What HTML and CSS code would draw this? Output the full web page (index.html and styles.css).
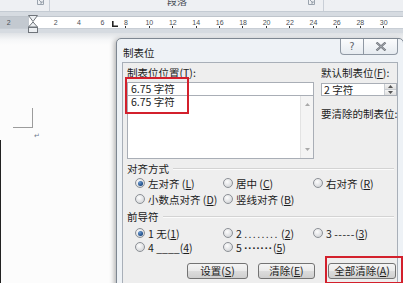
FILE: index.html
```html
<!DOCTYPE html>
<html>
<head>
<meta charset="utf-8">
<link rel="stylesheet" href="styles.css">
</head>
<body>
<div class="ribbon">
  <div class="rgroup g1"><svg class="launcher" width="7" height="7" viewBox="0 0 7 7"><path d="M0.5 0.5h6v6h-6z M2 2l3 3 M5 3v2h-2" fill="none" stroke="#9aa3ad" stroke-width="1"/></svg></div>
  <div class="rgroup g2"><span class="rtitle">段落</span><svg class="launcher" width="7" height="7" viewBox="0 0 7 7"><path d="M0.5 0.5h6v6h-6z M2 2l3 3 M5 3v2h-2" fill="none" stroke="#9aa3ad" stroke-width="1"/></svg></div>
  <div class="rgroup g3"></div>
</div>
<div class="rulerbar">
  <div class="ruler">
    <div class="scale">
      <span class="n">2</span><span class="n"></span><span class="n">2</span><span class="n">4</span><span class="n">6</span><span class="n t">8</span><span class="n t">10</span><span class="n t">12</span><span class="n t">14</span><span class="n t">16</span><span class="n t">18</span><span class="n t">20</span><span class="n t">22</span><span class="n t">24</span><span class="n t">26</span><span class="n t">28</span><span class="n t">30</span>
    </div>
  </div>
  <svg class="indent" width="10" height="18" viewBox="0 0 10 18"><path d="M0.5 0.5h9l-4.5 6z" fill="#eceff2" stroke="#6f747a"/><path d="M5 7l4.5 5h-9z" fill="#eceff2" stroke="#6f747a"/><rect x="0.5" y="12.5" width="9" height="5" fill="#eceff2" stroke="#6f747a"/></svg>
  <svg class="tabmark" width="6" height="6" viewBox="0 0 6 6"><path d="M0 0h1.6v4.4H6V6H0z" fill="#222"/></svg>
</div>
<div class="doc">
  <div class="crop"></div>
  <div class="pmark">↵</div>
</div>

<div class="dialog">
  <div class="titlebar">
    <span class="title">制表位</span>
    <div class="capbtns">
      <span class="cap help">?</span>
      <span class="cap close"><svg width="12" height="9" viewBox="0 0 12 9"><path d="M1.5 0.5l9 8M10.5 0.5l-9 8" stroke="#6d7178" stroke-width="2.2" fill="none"/><path d="M1.5 0.5l9 8M10.5 0.5l-9 8" stroke="#cfd3d8" stroke-width="0.6" fill="none"/></svg></span>
    </div>
  </div>
  <div class="client">
    <div class="top">
      <div class="lcol">
        <div class="lbl">制表位位置(<u>T</u>):</div>
        <div class="input">6.75 字符</div>
        <div class="list">
          <div class="items"><div class="item">6.75 字符</div></div>
          <div class="sbar">
            <span class="sbtn"><svg width="5" height="3" viewBox="0 0 5 3"><path d="M0 3L2.5 0 5 3z" fill="#a9a9a9"/></svg></span>
            <span class="sbtn"><svg width="5" height="3" viewBox="0 0 5 3"><path d="M0 0h5L2.5 3z" fill="#a9a9a9"/></svg></span>
          </div>
        </div>
      </div>
      <div class="rcol">
        <div class="lbl">默认制表位(<u>F</u>):</div>
        <div class="spin">
          <span class="spintext">2 字符</span>
          <span class="spinbtns">
            <span class="sp"><svg width="5" height="3" viewBox="0 0 5 3"><path d="M0 3L2.5 0 5 3z" fill="#555"/></svg></span>
            <span class="sp"><svg width="5" height="3" viewBox="0 0 5 3"><path d="M0 0h5L2.5 3z" fill="#555"/></svg></span>
          </span>
        </div>
        <div class="lbl clr">要清除的制表位:</div>
      </div>
    </div>

    <div class="ghead first"><span>对齐方式</span><i class="rule"></i></div>
    <div class="radios align">
      <label class="opt"><span class="radio on"></span><span class="txt">左对齐 (<u>L</u>)</span></label>
      <label class="opt"><span class="radio"></span><span class="txt">居中 (<u>C</u>)</span></label>
      <label class="opt"><span class="radio"></span><span class="txt">右对齐 (<u>R</u>)</span></label>
      <label class="opt"><span class="radio"></span><span class="txt">小数点对齐 (<u>D</u>)</span></label>
      <label class="opt"><span class="radio"></span><span class="txt">竖线对齐 (<u>B</u>)</span></label>
    </div>

    <div class="ghead"><span>前导符</span><i class="rule"></i></div>
    <div class="radios lead">
      <label class="opt"><span class="radio on"></span><span class="txt">1 无(<u>1</u>)</span></label>
      <label class="opt"><span class="radio"></span><span class="txt">2 <span class="dots">........</span> (<u>2</u>)</span></label>
      <label class="opt"><span class="radio"></span><span class="txt">3 <span class="dash">-----</span>(<u>3</u>)</span></label>
      <label class="opt"><span class="radio"></span><span class="txt">4 <span class="uscore">____</span>(<u>4</u>)</span></label>
      <label class="opt"><span class="radio"></span><span class="txt">5 <span class="mdots">·······</span>(<u>5</u>)</span></label>
    </div>

    <div class="buttons">
      <button class="btn b1">设置(<u>S</u>)</button>
      <button class="btn b2">清除(<u>E</u>)</button>
      <button class="btn b3">全部清除(<u>A</u>)</button>
    </div>
  </div>
</div>

<div class="mark m1"></div>
<div class="mark m2"></div>
</body>
</html>
```
FILE: styles.css
```css
* { box-sizing: border-box; }
html, body { margin: 0; padding: 0; }
body {
  width: 403px;
  height: 283px;
  overflow: hidden;
  position: relative;
  background: #fbfbfb;
  font-family: "Noto Sans CJK SC", "Noto Sans", sans-serif;
  font-size: 10.5px;
  color: #1c1c1c;
}
u { text-decoration: underline; text-underline-offset: 1px; }

/* ribbon remnant */
.ribbon {
  height: 12px;
  display: flex;
  background: #eef0f3;
  border-bottom: 1px solid #c4cbd3;
  overflow: hidden;
}
.rgroup { display: flex; align-items: flex-start; height: 11px; }
.g1 { width: 50px; border-right: 1px solid #c9cfd7; justify-content: flex-end; padding-right: 5px; }
.g2 { width: 274px; border-right: 1px solid #c9cfd7; }
.g3 { flex: 1; }
.launcher { margin-top: -2px; }
.rtitle {
  margin-left: 117px;
  margin-top: -5px;
  line-height: 12px;
  font-size: 10px;
  color: #4a4f57;
}
.g2 .launcher { margin-left: auto; margin-right: 8px; }

/* ruler */
.rulerbar {
  height: 21px;
  background: #d6dbe1;
  padding-top: 4px;
  position: relative;
}
.ruler {
  height: 13px;
  background: linear-gradient(90deg, #c3c9d0 0 29px, #ffffff 29px);
  border-top: 1px solid #bfc5cc;
  border-bottom: 1px solid #c8ced5;
  overflow: hidden;
}
.scale { display: flex; margin-left: -3px; }
.n {
  flex: 0 0 23.45px;
  text-align: center;
  font-family: "Liberation Sans", Arial, sans-serif;
  font-size: 7px;
  line-height: 11px;
  color: #4b4f55;
  position: relative;
}
.n.t::after {
  content: "";
  position: absolute;
  left: 11px;
  top: 9px;
  width: 1px;
  height: 2px;
  background: #333;
}
.indent { position: absolute; left: 28px; top: 3px; }
.tabmark { position: absolute; left: 112px; top: 9px; }

/* document */
.doc {
  height: 250px;
  background:
    linear-gradient(90deg, #222 1.5px, transparent 1.5px) 0 107px / 2px 100% no-repeat,
    linear-gradient(#dfe2e6, #f6f7f8 7px, #fcfcfc 12px);
  padding-top: 75px;
}
.crop {
  margin-left: 13px;
  width: 20px;
  height: 20px;
  border-right: 1px solid #9c9c9c;
  border-bottom: 1px solid #9c9c9c;
}
.pmark {
  margin-left: 34px;
  margin-top: 4px;
  font-family: "DejaVu Sans", sans-serif;
  font-size: 7px;
  line-height: 8px;
  color: #6f7a8c;
}

/* dialog */
.dialog {
  position: absolute;
  left: 116px;
  top: 38px;
  width: 288px;
  height: 260px;
  background: #eef2f6;
  border: 1px solid #7e8792;
  border-radius: 5px 5px 0 0;
  box-shadow: -2px 1px 5px rgba(0,0,0,0.28);
}
.titlebar {
  height: 23px;
  display: flex;
  justify-content: space-between;
  align-items: flex-start;
}
.title {
  padding: 7px 0 0 6px;
  line-height: 13px;
  font-size: 10.5px;
  color: #1d1d1d;
}
.capbtns { display: flex; margin-right: 5px; }
.cap {
  height: 16px;
  display: flex;
  align-items: center;
  justify-content: center;
  border: 1px solid #8f98a3;
  border-top: none;
  background: linear-gradient(#fbfcfd, #e6ebf0);
}
.help {
  width: 24px;
  border-radius: 0 0 0 4px;
  font-family: "DejaVu Sans", sans-serif;
  font-size: 10px;
  color: #5f646c;
}
.close {
  width: 34px;
  border-left: none;
  border-radius: 0 0 4px 0;
}

.client {
  margin: 0 5px;
  height: 240px;
  background: #eeeeee;
  border: 1px solid #a8afb8;
  border-bottom: none;
  padding: 0 0 0 4px;
}
.top { display: flex; }
.lcol { width: 187px; }
.rcol { width: 76px; margin-left: 7px; }
.lbl {
  margin-top: 3px;
  line-height: 13px;
  height: 13px;
  white-space: nowrap;
}
.input {
  margin-top: 3px;
  height: 14px;
  line-height: 12px;
  padding-left: 3px;
  background: #fff;
  border: 1px solid #a9aeb6;
}
.list {
  margin-top: -1px;
  height: 64px;
  background: #fff;
  border: 1px solid #a9aeb6;
  display: flex;
}
.items { flex: 1; padding-left: 3px; }
.item { line-height: 12px; }
.sbar {
  width: 13px;
  display: flex;
  flex-direction: column;
  justify-content: space-between;
  background: #f4f4f4;
  border-left: 1px solid #e3e3e3;
}
.sbtn {
  height: 17px;
  display: flex;
  align-items: center;
  justify-content: center;
}
.spin {
  margin-top: 4px;
  height: 13px;
  display: flex;
  background: #fff;
  border: 1px solid #a9aeb6;
}
.spintext { flex: 1; line-height: 11px; padding-left: 2px; }
.spinbtns {
  width: 12px;
  display: flex;
  flex-direction: column;
  border-left: 1px solid #c9cdd2;
}
.sp {
  flex: 1;
  display: flex;
  align-items: center;
  justify-content: center;
  background: linear-gradient(#f5f5f5, #dedede);
}
.sp + .sp { border-top: 1px solid #c9cdd2; }
.lbl.clr { margin-top: 11px; }

.ghead {
  display: flex;
  align-items: center;
  margin-top: 3px;
  height: 13px;
  line-height: 13px;
  padding-right: 3px;
}
.ghead.first { margin-top: 3px; }
.rule {
  flex: 1;
  margin-left: 4px;
  height: 2px;
  border-top: 1px solid #d3d3d3;
  border-bottom: 1px solid #fbfbfb;
}
.radios {
  display: grid;
  grid-template-columns: 88px 90px auto;
  padding-left: 8px;
}
.align { grid-auto-rows: 16px; }
.lead { grid-auto-rows: 14px; margin-top: 3px; }
.opt {
  display: flex;
  align-items: center;
  gap: 3px;
  white-space: nowrap;
}
.txt { white-space: pre; }
.radio {
  flex: 0 0 10px;
  width: 10px;
  height: 10px;
  border-radius: 50%;
  border: 1px solid #8c9096;
  background: radial-gradient(circle at 40% 35%, #fdfdfd, #d4d6d9 80%);
  display: flex;
  align-items: center;
  justify-content: center;
}
.radio.on::after {
  content: "";
  width: 5px;
  height: 5px;
  border-radius: 50%;
  background: radial-gradient(circle at 35% 30%, #6c9bd2, #1b4b86 70%);
}
.dots { font-family: "Liberation Sans", sans-serif; letter-spacing: 1.4px; }
.dash { letter-spacing: 0.5px; }
.mdots { font-family: "Liberation Sans", sans-serif; font-weight: bold; letter-spacing: 0.6px; }

.buttons {
  margin-top: 9px;
  display: flex;
  padding-left: 60px;
}
.btn {
  height: 16px;
  padding: 0;
  font: inherit;
  line-height: 14px;
  color: #1c1c1c;
  border: 1px solid #737373;
  border-radius: 3px;
  background: linear-gradient(#f4f4f4 0%, #eaeaea 48%, #dcdcdc 52%, #cfcfcf 100%);
}
.b1 { width: 61px; }
.b2 { width: 57px; margin-left: 10px; }
.b3 { width: 68px; margin-left: 13px; }

/* annotation boxes */
.mark {
  position: absolute;
  border: 2.5px solid #d3202c;
}
.m1 { left: 125px; top: 77px; width: 64px; height: 37px; }
.m2 { left: 325px; top: 256px; width: 78px; height: 28px; }
```
